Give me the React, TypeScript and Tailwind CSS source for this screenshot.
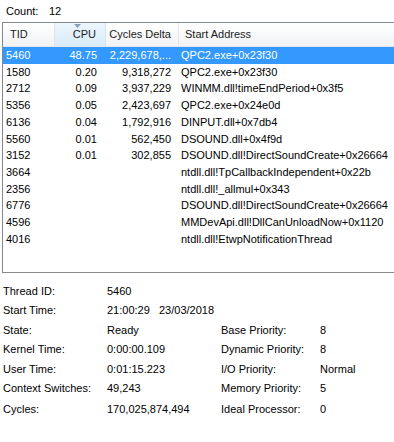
const rows = [
    { tid: "5460", cpu: "48.75", cycles: "2,229,678,...", addr: "QPC2.exe+0x23f30" },
    { tid: "1580", cpu: "0.20", cycles: "9,318,272", addr: "QPC2.exe+0x23f30" },
    { tid: "2712", cpu: "0.09", cycles: "3,937,229", addr: "WINMM.dll!timeEndPeriod+0x3f5" },
    { tid: "5356", cpu: "0.05", cycles: "2,423,697", addr: "QPC2.exe+0x24e0d" },
    { tid: "6136", cpu: "0.04", cycles: "1,792,916", addr: "DINPUT.dll+0x7db4" },
    { tid: "5560", cpu: "0.01", cycles: "562,450", addr: "DSOUND.dll+0x4f9d" },
    { tid: "3152", cpu: "0.01", cycles: "302,855", addr: "DSOUND.dll!DirectSoundCreate+0x26664" },
    { tid: "3664", cpu: "", cycles: "", addr: "ntdll.dll!TpCallbackIndependent+0x22b" },
    { tid: "2356", cpu: "", cycles: "", addr: "ntdll.dll!_allmul+0x343" },
    { tid: "6776", cpu: "", cycles: "", addr: "DSOUND.dll!DirectSoundCreate+0x26664" },
    { tid: "4596", cpu: "", cycles: "", addr: "MMDevApi.dll!DllCanUnloadNow+0x1120" },
    { tid: "4016", cpu: "", cycles: "", addr: "ntdll.dll!EtwpNotificationThread" },
];

const details = [
    { label: "Thread ID:", value: "5460" },
    { label: "Start Time:", value: "21:00:29\u00a0\u00a0\u00a023/03/2018" },
    { label: "State:", value: "Ready", label2: "Base Priority:", value2: "8" },
    { label: "Kernel Time:", value: "0:00:00.109", label2: "Dynamic Priority:", value2: "8" },
    { label: "User Time:", value: "0:01:15.223", label2: "I/O Priority:", value2: "Normal" },
    { label: "Context Switches:", value: "49,243", label2: "Memory Priority:", value2: "5" },
    { label: "Cycles:", value: "170,025,874,494", label2: "Ideal Processor:", value2: "0" },
];

export default function App() {
    return (
        <div className="w-[394px] h-[442px] bg-white text-black text-[11px] overflow-hidden" style={{ fontFamily: '"Liberation Sans", Arial, sans-serif' }}>
            <div className="h-[22px] flex items-center pl-[6px] pt-[1px]">
                <span className="w-[43px]">Count:</span>
                <span>12</span>
            </div>

            <div className="ml-[2px] h-[251px] border-l border-t border-b border-l-[#828790] border-t-[#828790] border-b-[#8a8a8a] overflow-hidden">
                <div className="flex h-[24px] border-b border-[#e3e5e8] bg-gradient-to-b from-white to-[#f2f3f5] text-[#1a1a1a]">
                    <div className="w-[52px] border-r border-[#e3e5e8] flex items-center pl-[7px]">TID</div>
                    <div className="relative w-[51px] border-r border-[#d4e3f1] flex items-center justify-end pr-[9px] bg-gradient-to-b from-[#ecf6fd] to-[#d9ecf9]">
                        <svg className="absolute left-[19px] top-[1px]" width="7" height="4" viewBox="0 0 7 4">
                            <path d="M0 0 H7 L3.5 4 Z" fill="#8e9fb5" />
                        </svg>
                        CPU
                    </div>
                    <div className="w-[73px] border-r border-[#e3e5e8] flex items-center justify-end pr-[7px]">Cycles Delta</div>
                    <div className="flex-1 flex items-center pl-[6px]">Start Address</div>
                </div>

                {rows.map((r, i) => (
                    <div key={i} className={`flex h-[16.7px] items-center whitespace-nowrap ${i === 0 ? "bg-[#3399ff] text-white" : ""}`}>
                        <div className="w-[52px] pl-[3px]">{r.tid}</div>
                        <div className="w-[51px] text-right pr-[9px]">{r.cpu}</div>
                        <div className="w-[73px] text-right pr-[8px]">{r.cycles}</div>
                        <div className="flex-1 pl-[2px]">{r.addr}</div>
                    </div>
                ))}
            </div>

            <div className="pt-[8px]">
                {details.map((d, i) => (
                    <div key={i} className={`flex items-center whitespace-nowrap ${i === 6 ? "h-[19.5px] mt-[1.5px]" : "h-[19.5px]"}`}>
                        <div className="w-[107px] pl-[3px]">{d.label}</div>
                        <div className="w-[114px]">{d.value}</div>
                        <div className="w-[99px]">{d.label2}</div>
                        <div className="flex-1">{d.value2}</div>
                    </div>
                ))}
            </div>
        </div>
    );
}
